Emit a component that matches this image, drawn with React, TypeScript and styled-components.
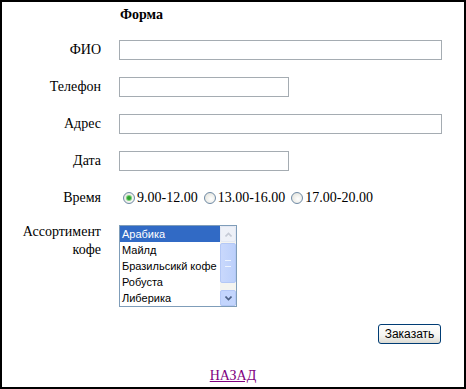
import styled, { createGlobalStyle } from "styled-components";

const GlobalStyle = createGlobalStyle`
  html, body {
    margin: 0;
    padding: 0;
    background: #fff;
  }
  body {
    font-family: "Liberation Serif", "Times New Roman", serif;
    font-size: 14px;
    color: #000;
  }
`;

const Frame = styled.div`
  width: 466px;
  height: 389px;
  box-sizing: border-box;
  border: 2px solid #000;
  padding-top: 5px;
  display: flex;
  flex-direction: column;
`;

const FormGrid = styled.form`
  display: grid;
  grid-template-columns: 99px 323px;
  column-gap: 18px;
  row-gap: 17px;
  align-items: center;
  margin: 0;
`;

const Title = styled.div`
  grid-column: 2;
  font-weight: bold;
  line-height: 16px;
  padding-left: 1px;
`;

const Label = styled.label<{ $top?: boolean }>`
  grid-column: 1;
  text-align: right;
  line-height: ${(p) => (p.$top ? "18px" : "16px")};
  align-self: ${(p) => (p.$top ? "start" : "center")};
  margin-top: ${(p) => (p.$top ? "-2px" : "0")};
`;

const TextInput = styled.input<{ $wide?: boolean }>`
  width: ${(p) => (p.$wide ? "323px" : "170px")};
  height: 20px;
  box-sizing: border-box;
  border: 1px solid #a5acb2;
  padding: 1px 3px;
  margin: 0;
  font: 13px "Liberation Sans", Arial, sans-serif;
  outline: none;
`;

const RadioGroup = styled.div`
  display: flex;
  align-items: center;
  gap: 2px;
  height: 20px;
`;

const RadioOption = styled.span`
  display: flex;
  align-items: center;
  white-space: nowrap;
  line-height: 16px;
`;

const RadioMark = styled.span<{ $checked?: boolean }>`
  width: 12px;
  height: 12px;
  box-sizing: border-box;
  border-radius: 50%;
  border: 1px solid #6f8aa5;
  background: radial-gradient(circle at 60% 60%, #fff 0%, #e8e8e2 70%, #d4d4cc 100%);
  margin: 0 2px 0 4px;
  display: flex;
  align-items: center;
  justify-content: center;
  &::after {
    content: "";
    display: ${(p) => (p.$checked ? "block" : "none")};
    width: 4px;
    height: 4px;
    border-radius: 50%;
    background: #2fa12f;
    box-shadow: 0 0 0 1px #7cd27c;
  }
`;

const ListBox = styled.div`
  width: 118px;
  height: 82px;
  box-sizing: border-box;
  border: 1px solid #7f9db9;
  display: flex;
  align-self: start;
  background: #fff;
`;

const Items = styled.div`
  flex: 1;
  min-width: 0;
  display: flex;
  flex-direction: column;
  overflow: hidden;
  font: 11px "Liberation Sans", Tahoma, sans-serif;
`;

const Item = styled.div<{ $selected?: boolean }>`
  height: 16px;
  line-height: 16px;
  padding-left: 2px;
  white-space: nowrap;
  background: ${(p) => (p.$selected ? "#316ac5" : "transparent")};
  color: ${(p) => (p.$selected ? "#fff" : "#000")};
`;

const ScrollBar = styled.div`
  width: 16px;
  flex-shrink: 0;
  display: flex;
  flex-direction: column;
  background: #f4f4f0;
`;

const ScrollButton = styled.div<{ $active?: boolean }>`
  height: 16px;
  box-sizing: border-box;
  border: 1px solid ${(p) => (p.$active ? "#b4c8f6" : "#e3e8f4")};
  border-radius: 2px;
  background: ${(p) => (p.$active ? "#c3d5fd" : "#eef1f8")};
  display: flex;
  align-items: center;
  justify-content: center;
`;

const Thumb = styled.div`
  height: 40px;
  margin-top: 1px;
  box-sizing: border-box;
  border: 1px solid #b4c8f6;
  border-radius: 2px;
  background: linear-gradient(to right, #c9d8fc, #bcd0fb);
  display: flex;
  align-items: center;
  justify-content: center;
  &::after {
    content: "";
    width: 6px;
    height: 5px;
    border-top: 1px solid #eef4fe;
    border-bottom: 1px solid #eef4fe;
  }
`;

const Track = styled.div`
  flex: 1;
`;

const ButtonRow = styled.div`
  grid-column: 2;
  display: flex;
  justify-content: flex-end;
  padding-right: 1px;
`;

const SubmitButton = styled.button`
  width: 63px;
  height: 20px;
  box-sizing: border-box;
  border: 1px solid #003c74;
  border-radius: 3px;
  background: linear-gradient(to bottom, #fff 0%, #f4f4f0 60%, #dcdbd3 100%);
  font: 12px "Liberation Sans", Tahoma, sans-serif;
  color: #000;
  padding: 0;
`;

const BackLink = styled.a`
  align-self: center;
  margin-top: 24px;
  line-height: 16px;
  color: #800080;
  text-decoration: underline;
`;

const Arrow = ({ up, color }: { up?: boolean; color: string }) => (
  <svg width="7" height="5" viewBox="0 0 7 5">
    <path
      d={up ? "M0.5 4.5 L3.5 1.5 L6.5 4.5" : "M0.5 0.5 L3.5 3.5 L6.5 0.5"}
      fill="none"
      stroke={color}
      strokeWidth="1.6"
    />
  </svg>
);

const coffee = ["Арабика", "Майлд", "Бразильсикй кофе", "Робуста", "Либерика"];

const App = () => {
  return (
    <>
      <GlobalStyle />
      <Frame>
        <FormGrid>
          <Title>Форма</Title>

          <Label>ФИО</Label>
          <TextInput $wide />

          <Label>Телефон</Label>
          <TextInput />

          <Label>Адрес</Label>
          <TextInput $wide />

          <Label>Дата</Label>
          <TextInput />

          <Label>Время</Label>
          <RadioGroup>
            <RadioOption>
              <RadioMark $checked />
              9.00-12.00
            </RadioOption>
            <RadioOption>
              <RadioMark />
              13.00-16.00
            </RadioOption>
            <RadioOption>
              <RadioMark />
              17.00-20.00
            </RadioOption>
          </RadioGroup>

          <Label $top>
            Ассортимент
            <br />
            кофе
          </Label>
          <ListBox>
            <Items>
              {coffee.map((c, i) => (
                <Item key={c} $selected={i === 0}>
                  {c}
                </Item>
              ))}
            </Items>
            <ScrollBar>
              <ScrollButton>
                <Arrow up color="#c6cbd6" />
              </ScrollButton>
              <Thumb />
              <Track />
              <ScrollButton $active>
                <Arrow color="#4d6185" />
              </ScrollButton>
            </ScrollBar>
          </ListBox>

          <ButtonRow>
            <SubmitButton type="button">Заказать</SubmitButton>
          </ButtonRow>
        </FormGrid>
        <BackLink href="#">НАЗАД</BackLink>
      </Frame>
    </>
  );
};

export default App;
